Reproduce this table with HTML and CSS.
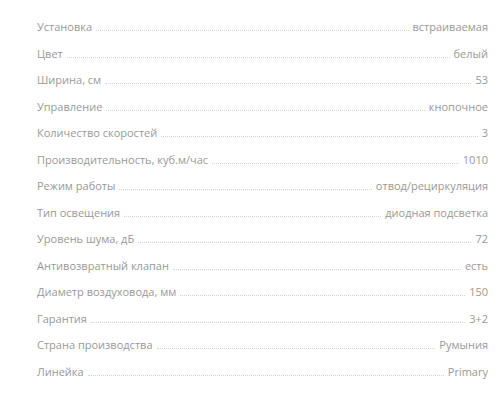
FILE: index.html
```html
<!DOCTYPE html>
<html lang="ru">
<head>
<meta charset="UTF-8">
<meta name="viewport" content="width=device-width, initial-scale=1.0">
<title>Характеристики</title>
<link rel="stylesheet" href="styles.css">
</head>
<body>
<!-- характеристики вытяжки -->
<ul class="specs">
    <li class="spec"><span class="name">Установка</span><span class="dots"></span><span class="val">встраиваемая</span></li>
    <li class="spec"><span class="name">Цвет</span><span class="dots"></span><span class="val">белый</span></li>
    <li class="spec"><span class="name">Ширина, см</span><span class="dots"></span><span class="val">53</span></li>
    <li class="spec"><span class="name">Управление</span><span class="dots"></span><span class="val">кнопочное</span></li>
    <li class="spec"><span class="name">Количество скоростей</span><span class="dots"></span><span class="val">3</span></li>
    <li class="spec"><span class="name">Производительность, куб.м/час</span><span class="dots"></span><span class="val">1010</span></li>
    <li class="spec"><span class="name">Режим работы</span><span class="dots"></span><span class="val">отвод/рециркуляция</span></li>
    <li class="spec"><span class="name">Тип освещения</span><span class="dots"></span><span class="val">диодная подсветка</span></li>
    <li class="spec"><span class="name">Уровень шума, дБ</span><span class="dots"></span><span class="val">72</span></li>
    <li class="spec"><span class="name">Антивозвратный клапан</span><span class="dots"></span><span class="val">есть</span></li>
    <li class="spec"><span class="name">Диаметр воздуховода, мм</span><span class="dots"></span><span class="val">150</span></li>
    <li class="spec"><span class="name">Гарантия</span><span class="dots"></span><span class="val">3+2</span></li>
    <li class="spec"><span class="name">Страна производства</span><span class="dots"></span><span class="val">Румыния</span></li>
    <li class="spec"><span class="name">Линейка</span><span class="dots"></span><span class="val">Primary</span></li>
</ul>
</body>
</html>
```

FILE: styles.css
```css
body {margin:0;padding:0;background:#fff;font-family:"Open Sans",Arial,sans-serif;color:#999;}
.specs {list-style:none;margin:0;padding:14px 12px 0 37px;}
.spec {display:flex;align-items:baseline;font-size:11px;line-height:26.5px;height:26.5px;}
.name,.val {white-space:nowrap;}
.dots {flex:1;border-bottom:1px dotted #d4d4d4;margin:0 4px;}
```
